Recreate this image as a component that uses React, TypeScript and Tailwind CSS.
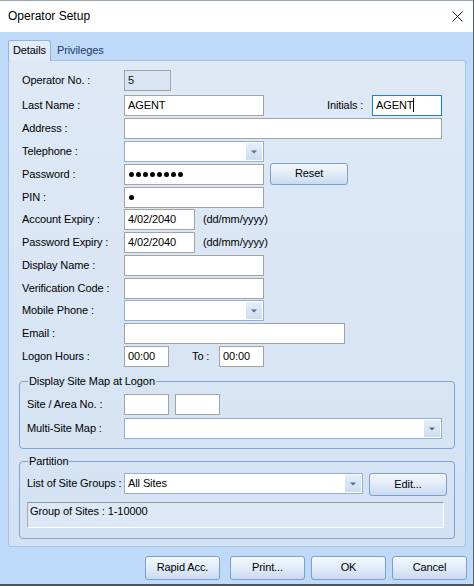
import type { ReactNode } from "react";

function TextBox({
  w,
  children,
  className = "",
}: {
  w: string;
  children?: ReactNode;
  className?: string;
}) {
  return (
    <div
      className={`${w} h-[21px] shrink-0 border border-[#a3a3a3] bg-white flex items-center px-[3px] pb-[1px] text-black ${className}`}
    >
      {children}
    </div>
  );
}

function Combo({ w, value }: { w: string; value?: string }) {
  return (
    <div
      className={`${w} h-[21px] shrink-0 border border-[#8fb0dc] bg-white flex items-stretch`}
    >
      <div className="flex-1 flex items-center px-[3px] pb-[1px]">{value}</div>
      <div className="w-[16px] m-[1px] ml-0 bg-linear-to-b from-[#e6eef9] to-[#ccdcf0] flex items-center justify-center">
        <svg width="6" height="4" viewBox="0 0 6 4" className="mt-[1px]">
          <path d="M0 0.5 L6 0.5 L3 3.5 Z" fill="#55698c" />
        </svg>
      </div>
    </div>
  );
}

function Button({ w, label, className = "" }: { w: string; label: string; className?: string }) {
  return (
    <button
      className={`${w} shrink-0 rounded-[3px] border border-[#7e9fc9] bg-linear-to-b from-[#f4f8fd] via-[#e1ebf8] to-[#c9dbf1] text-[11px] text-black flex items-center justify-center pb-[1px] ${className}`}
    >
      {label}
    </button>
  );
}

function Row({
  label,
  mt,
  labelW = "w-[102px]",
  children,
}: {
  label: string;
  mt: string;
  labelW?: string;
  children: ReactNode;
}) {
  return (
    <div className={`flex items-start h-[21px] ${mt}`}>
      <div className={`${labelW} shrink-0 h-[21px] flex items-center pb-[1px]`}>{label}</div>
      {children}
    </div>
  );
}

function Dots({ n }: { n: number }) {
  return (
    <div className="flex gap-[2px] pl-[1px]">
      {Array.from({ length: n }).map((_, i) => (
        <span key={i} className="w-[5px] h-[5px] rounded-full bg-black" />
      ))}
    </div>
  );
}

export default function App() {
  return (
    <div
      className="w-[474px] h-[586px] bg-[#bfd9f9] border-t border-t-[#9ba8b8] border-r border-r-[#55606d] border-b-2 border-b-[#4b5561] flex flex-col overflow-hidden text-[11px] tracking-[-0.1px] text-black"
      style={{ fontFamily: '"Liberation Sans", Arial, sans-serif' }}
    >
      {/* TITLE BAR */}
      <div className="h-[31px] shrink-0 bg-white flex items-center justify-between pl-[8px] pr-[10px] tracking-normal">
        <span className="text-[12px] pb-[1px]">Operator Setup</span>
        <svg width="11" height="11" viewBox="0 0 11 11">
          <path d="M0.5 0.5 L10.5 10.5 M10.5 0.5 L0.5 10.5" stroke="#111" strokeWidth="1" />
        </svg>
      </div>

      {/* TABS */}
      <div className="flex items-end pl-[8px] pt-[8px] h-[28px] relative z-10">
        <div className="px-[4px] border border-b-0 border-[#8fb2df] rounded-t-[3px] bg-[#e2ebf7] flex items-center pb-[2px] -mb-[1px] h-[21px]">
          Details
        </div>
        <div className="h-[18px] pl-[6px] pr-[3px] flex items-center text-[#1e3a5f] pb-[1px]">Privileges</div>
      </div>

      {/* PANEL */}
      <div className="ml-[8px] w-[458px] h-[487px] shrink-0 border border-[#a7c2e2] rounded-[3px] bg-linear-to-b from-[#dfe9f6] to-[#d3e2f3] flex flex-col">
        <div className="pl-[13px] pt-[9px] flex flex-col">
          <Row label="Operator No. :" mt="mt-0">
            <div className="w-[47px] h-[21px] border border-[#a0a0a0] bg-[#d9e5f4] flex items-center px-[3px] pb-[1px] text-[#111]">
              5
            </div>
          </Row>
          <Row label="Last Name :" mt="mt-[4px]">
            <TextBox w="w-[140px]">AGENT</TextBox>
            <div className="ml-[63px] w-[45px] h-[21px] flex items-center pb-[1px]">Initials :</div>
            <div className="w-[70px] h-[21px] border border-[#1f7fd8] bg-white flex items-center px-[3px] pb-[1px]">
              AGENT
              <span className="w-px h-[14px] bg-black" />
            </div>
          </Row>
          <Row label="Address :" mt="mt-[2px]">
            <TextBox w="w-[318px]" />
          </Row>
          <Row label="Telephone :" mt="mt-[2px]">
            <Combo w="w-[140px]" />
          </Row>
          <Row label="Password :" mt="mt-[2px]">
            <TextBox w="w-[140px]">
              <Dots n={8} />
            </TextBox>
            <Button w="w-[78px]" label="Reset" className="ml-[6px] h-[22px] -mt-[1px]" />
          </Row>
          <Row label="PIN :" mt="mt-[2px]">
            <TextBox w="w-[140px]">
              <Dots n={1} />
            </TextBox>
          </Row>
          <Row label="Account Expiry :" mt="mt-[1px]">
            <TextBox w="w-[71px]" className="items-start pt-[1px]">4/02/2040</TextBox>
            <div className="ml-[8px] h-[21px] flex items-center pb-[1px]">(dd/mm/yyyy)</div>
          </Row>
          <Row label="Password Expiry :" mt="mt-[2px]">
            <TextBox w="w-[71px]" className="items-start pt-[1px]">4/02/2040</TextBox>
            <div className="ml-[8px] h-[21px] flex items-center pb-[1px]">(dd/mm/yyyy)</div>
          </Row>
          <Row label="Display Name :" mt="mt-[2px]">
            <TextBox w="w-[140px]" />
          </Row>
          <Row label="Verification Code :" mt="mt-[2px]">
            <TextBox w="w-[140px]" />
          </Row>
          <Row label="Mobile Phone :" mt="mt-[1px]">
            <Combo w="w-[140px]" />
          </Row>
          <Row label="Email :" mt="mt-[2px]">
            <TextBox w="w-[221px]" />
          </Row>
          <Row label="Logon Hours :" mt="mt-[2px]">
            <TextBox w="w-[45px]" className="items-start pt-[1px]">00:00</TextBox>
            <div className="ml-[23px] w-[27px] h-[21px] flex items-center pb-[1px]">To :</div>
            <TextBox w="w-[45px]" className="items-start pt-[1px]">00:00</TextBox>
          </Row>
        </div>

        {/* DISPLAY SITE MAP GROUP */}
        <fieldset className="mx-[10px] mt-[8px] border border-[#7fa3d3] rounded-[4px] pl-[7px] pt-[6px] pb-[9px]">
          <legend className="ml-[1px] px-[1px] leading-[13px]">Display Site Map at Logon</legend>
          <div className="flex items-start h-[21px]">
            <div className="w-[97px] h-[21px] flex items-center pb-[1px]">Site / Area No. :</div>
            <TextBox w="w-[45px]" />
            <TextBox w="w-[45px]" className="ml-[6px]" />
          </div>
          <div className="flex items-start h-[21px] mt-[3px]">
            <div className="w-[97px] h-[21px] flex items-center pb-[1px]">Multi-Site Map :</div>
            <Combo w="w-[318px]" />
          </div>
        </fieldset>

        {/* PARTITION GROUP */}
        <fieldset className="mx-[10px] mt-[6px] border border-[#7fa3d3] rounded-[4px] pl-[7px] pt-[5px] pb-[10px]">
          <legend className="ml-[1px] px-[1px] leading-[13px]">Partition</legend>
          <div className="flex items-start h-[23px]">
            <div className="w-[97px] h-[21px] flex items-center pb-[1px]">List of Site Groups :</div>
            <Combo w="w-[239px]" value="All Sites" />
            <Button w="w-[78px]" label="Edit..." className="ml-[6px] h-[23px]" />
          </div>
          <div className="mt-[6px] w-[417px] h-[26px] border border-[#a9a9a9] border-r-white border-b-white border-t-[#9a9a9a] bg-[#dce8f5] pl-[2px] pt-[2px] leading-[13px]">
            Group of Sites : 1-10000
          </div>
        </fieldset>
      </div>

      {/* BOTTOM BUTTONS */}
      <div className="flex pl-[145px] mt-[9px]">
        <Button w="w-[75px]" label="Rapid Acc." className="h-[24px]" />
        <Button w="w-[75px]" label="Print..." className="h-[24px] ml-[10px]" />
        <Button w="w-[75px]" label="OK" className="h-[24px] ml-[6px]" />
        <Button w="w-[75px]" label="Cancel" className="h-[24px] ml-[6px]" />
      </div>
    </div>
  );
}
